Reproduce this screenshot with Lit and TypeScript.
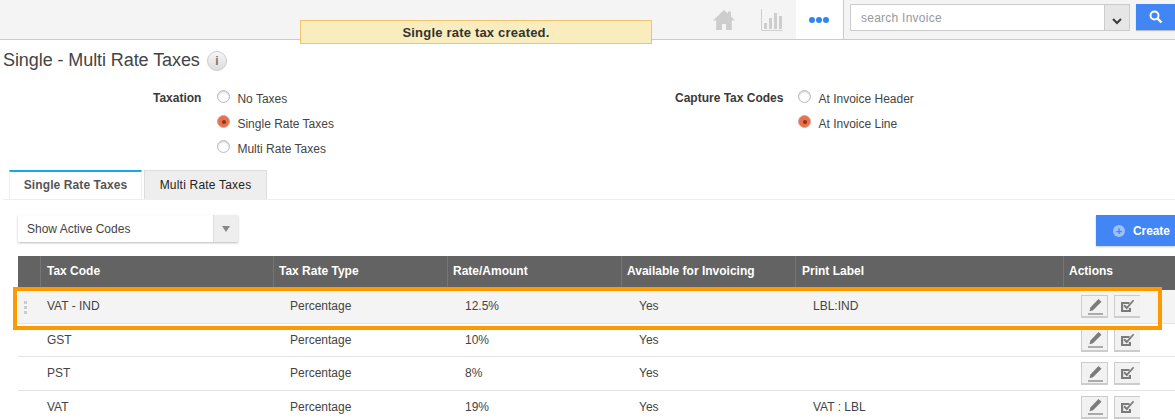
import { LitElement, html, css, svg } from "lit";
import { customElement } from "lit/decorators.js";

const rows = [
  ["VAT - IND", "Percentage", "12.5%", "Yes", "LBL:IND"],
  ["GST", "Percentage", "10%", "Yes", ""],
  ["PST", "Percentage", "8%", "Yes", ""],
  ["VAT", "Percentage", "19%", "Yes", "VAT : LBL"],
];
const heads = ["Tax Code", "Tax Rate Type", "Rate/Amount", "Available for Invoicing", "Print Label", "Actions"];

const pencil = svg`<svg width="17" height="17" viewBox="0 0 17 17"><path d="M12.500 1l3 2.800-8.500 8.500-3.500 1 .9-3.700z" fill="#7b7b7b"/><path d="M2 16h15" stroke="#7b7b7b" stroke-width="1.200"/></svg>`;
const check = svg`<svg width="16" height="14" viewBox="0 0 16 14"><path d="M1 3h8.500v2H3.200v6h5.600V9H11v4H1z" fill="#7b7b7b"/><path d="M4.800 5.600l2 2L13 .8l1.200 1-7.400 8.600-3.400-3.400z" fill="#7b7b7b"/></svg>`;

@customElement("app-root")
export class AppRoot extends LitElement {
  static styles = css`
    :host { display: block; width: 1175px; height: 420px; overflow: hidden; position: relative; background: #fff;
      font-family: "Liberation Sans", Arial, sans-serif; font-size: 12px; color: #444; }
    .top { height: 39px; background: #f4f4f4; border-bottom: 1px solid #ccc; display: flex; justify-content: flex-end; align-items: stretch; }
    .nav { width: 48px; display: flex; align-items: center; justify-content: center; }
    .nav.more { background: #fff; border-right: 1px solid #ccc; height: 39px; box-sizing: border-box; width: 48px; gap: 1px; padding-right: 2px; }
    .dot { width: 6px; height: 6px; border-radius: 50%; background: #2e86f5; }
    .searchbox { width: 331px; box-sizing: border-box; display: flex; padding: 4px 0 0 6px; align-items: flex-start; }
    .search { width: 256px; height: 27px; box-sizing: border-box; border: 1px solid #ccc; background: #fff; color: #999; font-size: 12px; padding: 0 10px; line-height: 26px; letter-spacing: .25px; }
    .chev { width: 25px; height: 27px; box-sizing: border-box; border: 1px solid #ccc; border-left: 0; background: #e6e6e6; display: flex; align-items: center; justify-content: center; padding-top: 7px; }
    .sbtn { margin-left: 6px; width: 39px; height: 26px; background: #4285f4; box-shadow: 0 1px 1px #bbb; display: flex; align-items: center; justify-content: center; }
    .flash { position: absolute; left: 300px; top: 20px; width: 352px; height: 24px; box-sizing: border-box; background: #f9edbe; border: 1px solid #f0c36d; text-align: center; font-weight: bold; font-size: 13px; line-height: 23px; color: #333; letter-spacing: .2px; }
    .title { display: flex; align-items: center; gap: 7px; padding: 9px 0 0 3px; height: 23px; font-size: 18px; line-height: 23px; color: #444; letter-spacing: -.08px; }
    .info { width: 18px; height: 18px; border-radius: 50%; border: 1px solid #ccc; background: linear-gradient(#f6f6f6, #ddd); color: #777; font: bold 12px/18px "Liberation Sans", sans-serif; text-align: center; }
    .form { display: flex; padding-top: 12px; height: 94px; box-sizing: border-box; margin-top: 5px; }
    .group { display: flex; align-items: flex-start; }
    .g1 { width: 675px; justify-content: flex-start; padding-left: 153px; box-sizing: border-box; }
    .lbl { font-weight: bold; color: #3a3a3a; line-height: 18px; }
    .opts { display: flex; flex-direction: column; gap: 7px; }
    .g1 .opts { margin-left: 16px; }
    .g2 .opts { margin-left: 15px; }
    .opt { display: flex; gap: 7px; height: 18px; align-items: flex-start; line-height: 20px; }
    .radio { width: 11px; height: 11px; margin-top: 1px; border-radius: 50%; border: 1px solid #bbb; background: #fff; box-shadow: inset 0 1px 2px #ccc; display: flex; align-items: center; justify-content: center; }
    .radio.on { background: #e8704a; border-color: #e0a48f; box-shadow: none; }
    .radio.on::after { content: ""; width: 4px; height: 4px; border-radius: 50%; background: #7a3a25; }
    .tabs { display: flex; gap: 2px; margin: 0 0 0 3px; padding-left: 6px; border-bottom: 1px solid #eee; height: 29px; margin-top: -1px; }
    .tab { box-sizing: border-box; height: 29px; display: flex; align-items: center; font-size: 12px; background: #eee; border: 1px solid #ddd; border-bottom: 0; color: #222; justify-content: center; letter-spacing: .2px; }
    .tab.on { width: 133px; background: #fff; border-color: #eee; border-top: 2px solid #13a9f1; font-weight: bold; color: #555; letter-spacing: .1px; padding-bottom: 2px; }
    .tab.off { width: 123px; }
    .tools { display: flex; justify-content: space-between; align-items: flex-start; height: 56px; box-sizing: border-box; padding: 15px 0 0 18px; }
    .sel { width: 220px; height: 27px; box-sizing: border-box; background: #fff; box-shadow: 0 1px 2px #bbb; display: flex; line-height: 28px; padding-left: 9px; justify-content: space-between; color: #444; }
    .sel .ar { width: 24px; background: #eee; border-left: 1px solid #ddd; display: flex; align-items: center; justify-content: center; }
    .tri { width: 0; height: 0; border: 4px solid transparent; border-top: 6px solid #888; border-bottom: 0; }
    .create { width: 79px; height: 31px; background: #4285f4; color: #fff; font-weight: bold; font-size: 12px; display: flex; align-items: center; gap: 8px; padding-left: 17px; box-sizing: border-box; box-shadow: 0 1px 2px #ccc; letter-spacing: -.1px; }
    .plus { width: 12px; height: 12px; border-radius: 50%; background: #9dbff8; color: #4285f4; display: flex; align-items: center; justify-content: center; font-size: 11px; line-height: 12px; }
    .table { margin-left: 18px; width: 1157px; }
    .row { display: grid; grid-template-columns: 23px 233px 174px 174px 174px 268px 111px; }
    .head { height: 34px; background: #636363; color: #fff; font-weight: bold; }
    .head > div { border-right: 1px solid #757575; padding-left: 5px; line-height: 31px; box-sizing: border-box; }
    .head > div:first-child { padding: 0; }
    .head > div:nth-child(2), .head > div:nth-child(6) { padding-left: 6px; }
    .head > div:last-child { border: 0; padding-left: 5px; }
    .body { height: 33.5px; box-sizing: border-box; border-bottom: 1px solid #e4e4e4; line-height: 32.6px; color: #444; }
    .body.hl { background: #f4f4f4; }
    .body > div { padding-left: 16px; box-sizing: border-box; }
    .body > div:nth-child(2) { padding-left: 6px; }
    .body > div:first-child { padding: 0; }
    .body > div:nth-child(4), .body > div:nth-child(5), .body > div:nth-child(6) { padding-left: 17px; }
    .grip { display: flex; flex-direction: column; gap: 2px; padding: 11px 0 0 6px !important; }
    .grip i { width: 3px; height: 3px; background: #ccc; display: block; }
    .acts { display: flex; gap: 6px; padding: 5px 0 0 17px !important; }
    .btn { width: 27px; height: 23px; box-sizing: border-box; border: 1px solid #ccc; border-bottom-width: 2px; background: #f2f2f2; display: flex; align-items: center; justify-content: center; }
    .btn.b2 { border-right: 0; width: 26px; }
    .mark { position: absolute; left: 13px; top: 287px; width: 1149px; height: 43px; box-sizing: border-box; border: 4px solid #f90; pointer-events: none; }
  `;

  private radio(label: string, on = false) {
    return html`<div class="opt"><span class="radio ${on ? "on" : ""}"></span><span>${label}</span></div>`;
  }

  render() {
    return html`
      <div class="top">
        <div class="nav"><svg width="24" height="22" viewBox="0 0 24 22"><path d="M12 1L1 11.500h3.200V21h5.800v-6h4v6h5.800v-9.500H23L19 7.600V2.500h-3v2.300z" fill="#cdcdcd"/></svg></div>
        <div class="nav"><svg width="22" height="22" viewBox="0 0 22 22"><path d="M.5 0v21.500h21" fill="none" stroke="#cfcfcf"/><path d="M3 14h3v6H3zM8 9h3v11H8zM13 4h3v16h-3zM18 7h3v13h-3z" fill="#cdcdcd"/></svg></div>
        <div class="nav more"><span class="dot"></span><span class="dot"></span><span class="dot"></span></div>
        <div class="searchbox">
          <div class="search">search Invoice</div>
          <div class="chev"><svg width="10" height="7" viewBox="0 0 10 7"><path d="M1 1l4 4 4-4" fill="none" stroke="#3a3a3a" stroke-width="2"/></svg></div>
          <div class="sbtn"><svg width="14" height="14" viewBox="0 0 14 14"><circle cx="5.500" cy="5.500" r="4" fill="none" stroke="#fff" stroke-width="2"/><path d="M8.500 8.500l4 4" stroke="#fff" stroke-width="2.400"/></svg></div>
        </div>
      </div>
      <div class="flash">Single rate tax created.</div>
      <div class="title"><span>Single - Multi Rate Taxes</span><span class="info">i</span></div>
      <div class="form">
        <div class="group g1"><span class="lbl">Taxation</span>
          <div class="opts">${this.radio("No Taxes")}${this.radio("Single Rate Taxes", true)}${this.radio("Multi Rate Taxes")}</div>
        </div>
        <div class="group g2"><span class="lbl">Capture Tax Codes</span>
          <div class="opts">${this.radio("At Invoice Header")}${this.radio("At Invoice Line", true)}</div>
        </div>
      </div>
      <div class="tabs"><div class="tab on">Single Rate Taxes</div><div class="tab off">Multi Rate Taxes</div></div>
      <div class="tools">
        <div class="sel"><span>Show Active Codes</span><span class="ar"><span class="tri"></span></span></div>
        <div class="create"><span class="plus">+</span>Create</div>
      </div>
      <div class="table">
        <div class="row head"><div></div>${heads.map((h) => html`<div>${h}</div>`)}</div>
        ${rows.map((r, i) => html`<div class="row body ${i === 0 ? "hl" : ""}">
          <div class="grip">${i === 0 ? html`<i></i><i></i><i></i>` : ""}</div>
          ${r.map((c) => html`<div>${c}</div>`)}
          <div class="acts"><span class="btn">${pencil}</span><span class="btn b2">${check}</span></div>
        </div>`)}
      </div>
      <div class="mark"></div>
    `;
  }
}
